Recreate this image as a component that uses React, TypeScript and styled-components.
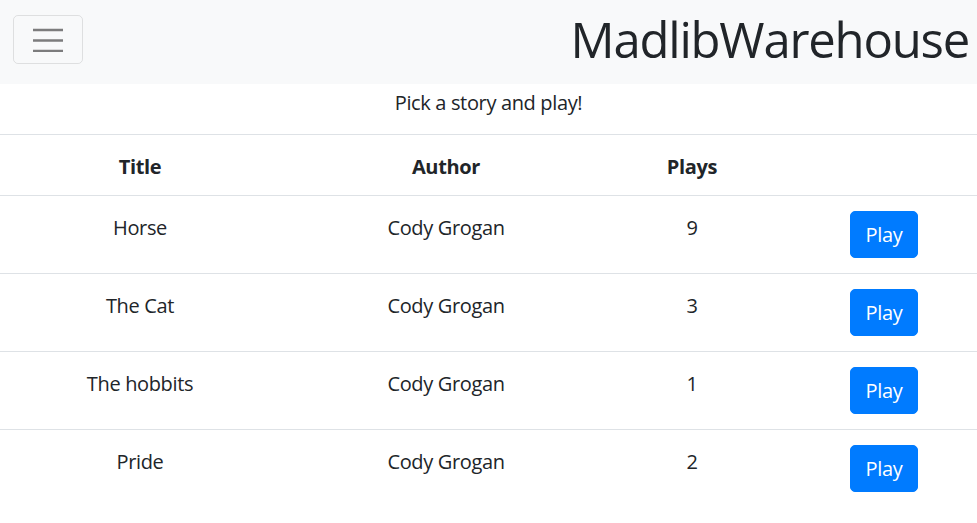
import React from "react";
import styled, { createGlobalStyle } from "styled-components";

const GlobalStyle = createGlobalStyle`
  html, body {
    margin: 0;
    padding: 0;
    background: #ffffff;
  }
  body {
    font-family: "Open Sans", "Noto Sans", "Liberation Sans", sans-serif;
    color: #212529;
    font-size: 20px;
    line-height: 30px;
    letter-spacing: -0.35px;
  }
  * { box-sizing: border-box; }
`;

const Page = styled.div`
  width: 977px;
  display: flex;
  flex-direction: column;
`;

const NavBar = styled.nav`
  height: 84px;
  background: #f8f9fa;
  display: flex;
  align-items: center;
  justify-content: space-between;
  padding: 0 8px 0 13px;
`;

const Toggler = styled.button`
  width: 70px;
  height: 49px;
  margin-top: -5px;
  border: 1px solid rgba(0, 0, 0, 0.1);
  border-radius: 5px;
  background: transparent;
  display: flex;
  align-items: center;
  justify-content: center;
  padding: 0;
  cursor: pointer;
`;

const Brand = styled.div`
  font-size: 49px;
  line-height: 60px;
  margin-top: -7px;
  color: #212529;
  letter-spacing: -1.2px;
`;

const Lead = styled.p`
  margin: 4px 0 16px;
  text-align: center;
  font-size: 20px;
  line-height: 30px;
`;

const Table = styled.div`
  display: flex;
  flex-direction: column;
  border-top: 1px solid #dee2e6;
`;

const Row = styled.div<{ $head?: boolean }>`
  display: grid;
  grid-template-columns: 280px 332px 160px 205px;
  border-top: ${(p) => (p.$head ? "none" : "1px solid #dee2e6")};
  height: ${(p) => (p.$head ? "60px" : "78px")};
  font-weight: ${(p) => (p.$head ? 700 : 400)};
`;

const Cell = styled.div`
  text-align: center;
  padding-top: 17px;
`;

const HeadCell = styled(Cell)`
  padding-top: 17px;
`;

const ButtonCell = styled.div`
  display: flex;
  justify-content: flex-end;
  padding: 15px 59px 0 0;
`;

const PlayButton = styled.button`
  width: 68px;
  height: 47px;
  border: 1px solid #007bff;
  border-radius: 5px;
  background: #007bff;
  color: #ffffff;
  font-family: inherit;
  font-size: 20px;
  line-height: 30px;
  letter-spacing: -0.35px;
  padding: 0;
  cursor: pointer;
`;

const stories = [
  { title: "Horse", author: "Cody Grogan", plays: 9 },
  { title: "The Cat", author: "Cody Grogan", plays: 3 },
  { title: "The hobbits", author: "Cody Grogan", plays: 1 },
  { title: "Pride", author: "Cody Grogan", plays: 2 },
];

function MenuIcon() {
  return (
    <svg width="32" height="24" viewBox="0 0 32 24" aria-hidden="true">
      <path
        d="M1 2h30M1 12.5h30M1 23h30"
        stroke="rgba(0,0,0,0.5)"
        strokeWidth="2.4"
        strokeLinecap="butt"
        fill="none"
      />
    </svg>
  );
}

export default function App() {
  return (
    <Page>
      <GlobalStyle />
      <NavBar>
        <Toggler aria-label="Toggle navigation">
          <MenuIcon />
        </Toggler>
        <Brand>MadlibWarehouse</Brand>
      </NavBar>
      <Lead>Pick a story and play!</Lead>
      <Table>
        <Row $head>
          <HeadCell>Title</HeadCell>
          <HeadCell>Author</HeadCell>
          <HeadCell>Plays</HeadCell>
          <HeadCell />
        </Row>
        {stories.map((s) => (
          <Row key={s.title}>
            <Cell>{s.title}</Cell>
            <Cell>{s.author}</Cell>
            <Cell>{s.plays}</Cell>
            <ButtonCell>
              <PlayButton>Play</PlayButton>
            </ButtonCell>
          </Row>
        ))}
      </Table>
    </Page>
  );
}
